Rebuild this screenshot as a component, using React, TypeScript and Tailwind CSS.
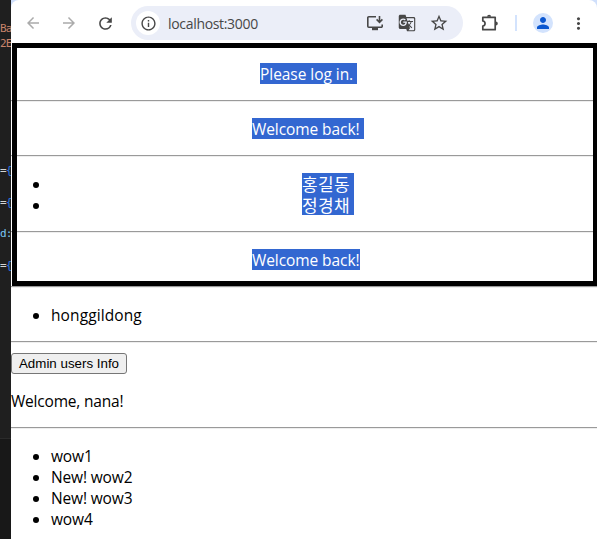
import type { ReactNode } from 'react';
import {
  MdArrowBack,
  MdArrowForward,
  MdGTranslate,
  MdInfoOutline,
  MdMoreVert,
  MdPerson,
  MdRefresh,
  MdStarOutline,
} from 'react-icons/md';

const codeLines = ['Ba', '2E', '', '', '', '', '', '', '', '={', '', '={', '', 'd:', '', '={'];

function CodeLine({ text }: { text: string }) {
  return (
    <div className="h-[15.83px] whitespace-pre leading-[15.83px]">
      {text === '={' ? (
        <>
          <span className="text-[#d4d4d4]">=</span>
          <span className="text-[#2979e8]">{'{'}</span>
        </>
      ) : (
        <span className={text === 'd:' ? 'text-[#7cc8f5]' : 'text-[#c8836a]'}>{text}</span>
      )}
    </div>
  );
}

function Editor() {
  return (
    <div className="flex w-[11px] shrink-0 flex-col overflow-hidden bg-[#1f1f1f]">
      <div className="h-[438px] shrink-0 pt-[20.5px] font-['DejaVu_Sans_Mono',monospace] text-[11px] tracking-[-0.9px]">
        {codeLines.map((text, i) => (
          <CodeLine key={i} text={text} />
        ))}
      </div>
      <div className="grow border-t border-[#2b2b2b] bg-[#181818]" />
    </div>
  );
}

function InstallIcon() {
  return (
    <svg width="18" height="18" viewBox="0 0 18 18" fill="none" stroke="#474747" strokeWidth="1.6">
      <path d="M10 2.8H2.8a1 1 0 0 0-1 1v8.4a1 1 0 0 0 1 1h12.4a1 1 0 0 0 1-1V10.5" />
      <path d="M13.5 2v6M10.6 5.4l2.9 2.9 2.9-2.9" />
      <path d="M6 15.1h6" strokeWidth="2.2" />
    </svg>
  );
}

function ExtensionIcon() {
  return (
    <svg width="18" height="18" viewBox="0 0 18 18">
      <path
        d="M1.8 3.3h12.4v12.4H1.8v-3.6c3-.6 3-4.6 0-5.2Z"
        fill="none"
        stroke="#474747"
        strokeWidth="1.7"
        strokeLinejoin="round"
      />
      <path d="M6.1 2.8a2 2 0 0 1 4 0ZM14.8 7.5a2 2 0 0 1 0 4Z" fill="#474747" />
    </svg>
  );
}

function Toolbar() {
  return (
    <div className="bg-[#cfdffb]">
      <div className="flex h-[43px] items-center rounded-t-lg bg-white pl-[13px] pt-[3px] text-[#474747]">
        <MdArrowBack size={18} className="mr-[18px] text-[#ababab]" />
        <MdArrowForward size={18} className="mr-[18px] text-[#ababab]" />
        <MdRefresh size={19} className="mr-4" />
        <div className="flex h-[34px] w-[332px] items-center rounded-full bg-[#ebeef8] pl-[5px] pr-3.5">
          <div className="flex size-6 items-center justify-center rounded-full bg-white">
            <MdInfoOutline size={17} />
          </div>
          <span className="ml-2 grow font-['Open_Sans',sans-serif] text-[14px] tracking-[-0.32px] text-[#474747]">
            localhost:3000
          </span>
          <InstallIcon />
          <MdGTranslate size={18} className="ml-3.5" />
          <MdStarOutline size={20} className="ml-[13px]" />
        </div>
        <div className="ml-[18px]">
          <ExtensionIcon />
        </div>
        <div className="ml-4 h-4 w-0.5 bg-[#d3e3fd]" />
        <div className="ml-4 flex size-5 items-center justify-center rounded-full bg-[#d3e3fd]">
          <MdPerson size={18} className="text-[#0b57d0]" />
        </div>
        <MdMoreVert size={19} className="ml-4" />
      </div>
    </div>
  );
}

function Rule() {
  return <hr className="h-0.5 border-0 border-t border-[#9a9a9a] bg-[#eeeeee]" />;
}

function Selected({ children, width }: { children: ReactNode; width: string }) {
  return <span className={`block h-[21px] whitespace-nowrap bg-[#3367d1] text-white ${width}`}>{children}</span>;
}

function Item({ children }: { children: ReactNode }) {
  return (
    <li className="flex h-[21px] items-start">
      <span className="ml-[22px] mr-3 mt-[9px] size-1.5 shrink-0 rounded-full bg-black" />
      {children}
    </li>
  );
}

export default function App() {
  return (
    <div className="flex h-[539px] w-[597px] overflow-hidden bg-white text-black">
      <Editor />
      <div className="flex w-[586px] flex-col">
        <Toolbar />
        <main className="relative font-['Open_Sans','Noto_Sans_CJK_KR',sans-serif] text-[15.5px] leading-[23px] tracking-[-0.15px]">
          <div className="pointer-events-none absolute left-px right-0 top-0 h-[243px] border-5 border-r-4 border-black" />
          <div className="pb-4 pl-[249px] pt-5 tracking-[-0.05px]">
            <Selected width="w-[97px]">Please log in.</Selected>
          </div>
          <Rule />
          <div className="py-4 pl-[241px] tracking-[-0.08px]">
            <Selected width="w-[112px]">Welcome back!</Selected>
          </div>
          <Rule />
          <ul className="py-4 text-[17px] tracking-[0.4px]">
            <Item>
              <div className="ml-[251px]">
                <Selected width="w-[52px]">홍길동</Selected>
              </div>
            </Item>
            <Item>
              <div className="ml-[251px]">
                <Selected width="w-[52px]">정경채</Selected>
              </div>
            </Item>
          </ul>
          <Rule />
          <div className="py-4 pl-[241px] tracking-[-0.08px]">
            <Selected width="w-[108px]">Welcome back!</Selected>
          </div>
          <Rule />
          <ul className="py-4 tracking-[0.1px]">
            <Item>honggildong</Item>
          </ul>
          <Rule />
          <button className="mt-2.5 block h-[21px] w-[116px] whitespace-nowrap rounded-[3px] border border-[#767676] bg-[#efefef] font-['Liberation_Sans',sans-serif] text-[13.33px] leading-[19px] tracking-normal">
            Admin users Info
          </button>
          <p className="h-[53px] pt-4 tracking-[-0.2px]">Welcome, nana!</p>
          <Rule />
          <ul className="pt-4">
            <Item>wow1</Item>
            <Item>New! wow2</Item>
            <Item>New! wow3</Item>
            <Item>wow4</Item>
          </ul>
        </main>
      </div>
    </div>
  );
}
